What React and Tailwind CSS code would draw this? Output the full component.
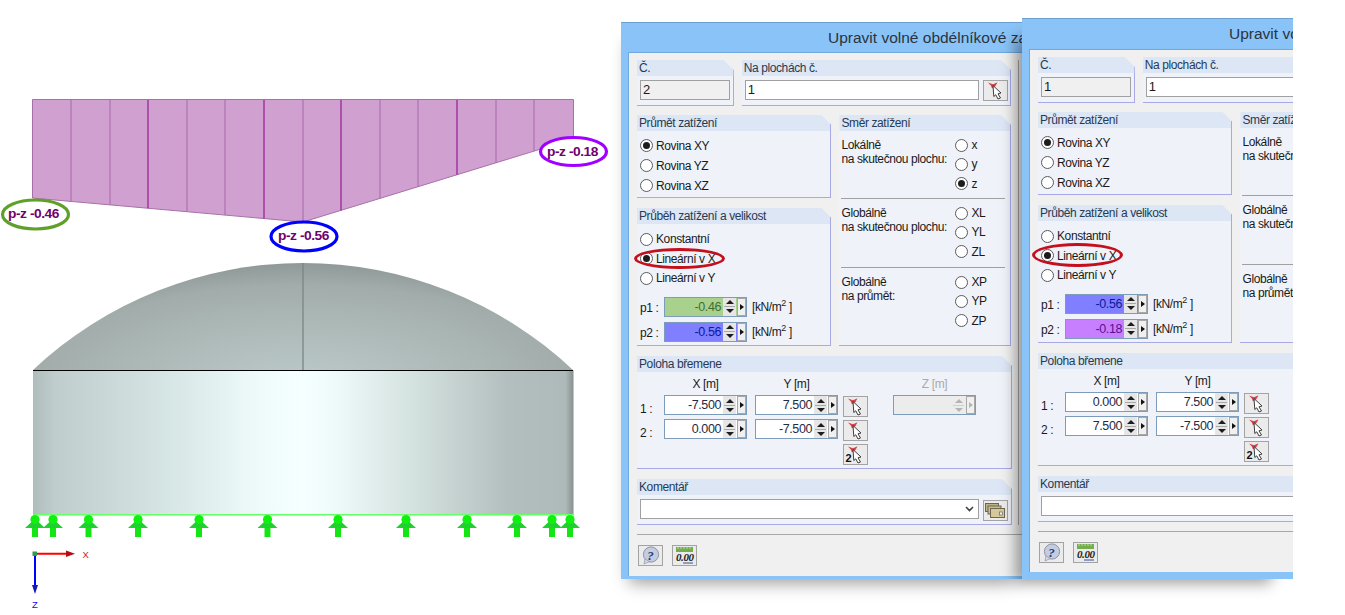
import React from "react";

const SUPPORTS = [35, 53, 88.5, 138, 199, 267.5, 338, 406, 467, 517, 552, 570];
const DIVIDERS = [71, 110, 148, 187, 225, 264, 303, 341, 380, 418, 457, 496, 534];
const DARK_DIVIDERS = [148, 264, 341, 457];

const loadLabels = [
  { cx: 35.5, cy: 214.5, rx: 33, ry: 14.5, stroke: "#5fa02a", x: 8, y: 218, text: "p-z -0.46" },
  { cx: 304, cy: 236.5, rx: 33, ry: 14.5, stroke: "#0000ff", x: 278, y: 240, text: "p-z -0.56" },
  { cx: 573.5, cy: 151.5, rx: 33, ry: 14, stroke: "#a000ff", x: 547, y: 156, text: "p-z -0.18" },
];

const Model = () => (
  <svg width="620" height="615" viewBox="0 0 620 615" className="block">
    <defs>
      <radialGradient id="dome" gradientUnits="userSpaceOnUse" cx="0" cy="0" r="1" gradientTransform="translate(303 385) scale(340 125)">
        <stop offset="0" stopColor="#bccaca" />
        <stop offset="0.6" stopColor="#a9b5b3" />
        <stop offset="0.8" stopColor="#a2acaa" />
        <stop offset="1" stopColor="#8c9694" />
      </radialGradient>
      <linearGradient id="wall" x1="0" x2="1" y1="0" y2="0">
        <stop offset="0" stopColor="#aebcbb" />
        <stop offset="0.04" stopColor="#bfcdcc" />
        <stop offset="0.25" stopColor="#d6e6e4" />
        <stop offset="0.42" stopColor="#eefbfa" />
        <stop offset="0.5" stopColor="#f6ffff" />
        <stop offset="0.56" stopColor="#eefafa" />
        <stop offset="0.7" stopColor="#d4e2e0" />
        <stop offset="0.88" stopColor="#b3bfbe" />
        <stop offset="0.985" stopColor="#aeb9b9" />
        <stop offset="1" stopColor="#87918f" />
      </linearGradient>
    </defs>

    {/* load diagram */}
    <polygon points="32.5,99.5 573.5,99.5 573.5,139 303,222 32.5,198" fill="#d0a0d0" stroke="#a870a8" />
    {DIVIDERS.map((x, i) => {
      const bottom = x < 303 ? 198 + ((x - 32.5) / 270.5) * 24 : 222 - ((x - 303) / 270.5) * 83;
      return (
        <line
          key={i}
          x1={x}
          x2={x}
          y1="100"
          y2={bottom}
          stroke={DARK_DIVIDERS.includes(x) ? "#880088" : "#a868a8"}
        />
      );
    })}
    {loadLabels.map((l) => (
      <g key={l.text}>
        <ellipse cx={l.cx} cy={l.cy} rx={l.rx} ry={l.ry} fill="#fff" stroke={l.stroke} strokeWidth="3.2" />
        <text
          x={l.x}
          y={l.y}
          fill="#700070"
          fontFamily="'Liberation Sans', sans-serif"
          fontWeight="700"
          fontSize="12"
          textLength="51"
          lengthAdjust="spacingAndGlyphs"
        >
          {l.text}
        </text>
      </g>
    ))}

    {/* tank */}
    <path d="M33 370 A394 394 0 0 1 573 370 Z" fill="url(#dome)" />
    <line x1="303" x2="303" y1="263" y2="370" stroke="#7a8585" strokeWidth="1.3" />
    <rect x="33" y="370" width="540.5" height="144" fill="url(#wall)" />
    <line x1="33" x2="573" y1="370.5" y2="370.5" stroke="#000" />
    <line x1="33" x2="574" y1="514.8" y2="514.8" stroke="#66ff66" strokeWidth="1.4" />

    {/* supports */}
    {SUPPORTS.map((x) => (
      <g key={x} fill="#14e614">
        <rect x={x - 3} y="524" width="6" height="13" />
        <polygon points={`${x - 3.5},522 ${x + 3.5},522 ${x + 10},528 ${x - 10},528`} fill="#1fd02f" />
        <circle cx={x} cy="519.5" r="4.6" fill="#10f010" />
      </g>
    ))}

    {/* axes */}
    <line x1="35" x2="70" y1="553.7" y2="553.7" stroke="#ff0000" strokeWidth="2" />
    <polygon points="66,550.5 75,553.7 66,557" fill="#b01010" />
    <line x1="35" x2="35" y1="554" y2="588" stroke="#0000ff" strokeWidth="2" />
    <polygon points="32,585 38,585 35,594" fill="#1a1ab0" />
    <rect x="32.5" y="551.5" width="4.5" height="4.5" fill="#2e9c4a" />
    <text x="82.5" y="558" fill="#e01010" fontFamily="'Liberation Sans', sans-serif" fontSize="9.5">X</text>
    <text x="32" y="608" fill="#1010e0" fontFamily="'Liberation Sans', sans-serif" fontSize="9.5">Z</text>
  </svg>
);

const PickIcon = ({ two }) => (
  <svg width="23" height="19" viewBox="0 0 23 19">
    <path d="M4 1.5 L9 3.2 L13.5 1.2 L11.5 5 L8 7.5 L7 4.8 Z" fill="#d8404a" />
    <path
      d="M9 4.5 L17 12 L14 12.8 L16.5 17 L14 18 L11.8 13.8 L9.8 15.5 Z"
      fill="#fff"
      stroke="#2a2a2a"
      strokeWidth="0.9"
      strokeLinejoin="round"
    />
    {two && (
      <text x="1.5" y="16.5" fontSize="11" fontWeight="700" fill="#111" fontFamily="'Liberation Sans', sans-serif">2</text>
    )}
  </svg>
);

const FolderIcon = () => (
  <svg width="21" height="15" viewBox="0 0 21 15">
    <rect x="0.5" y="0.5" width="13" height="8" fill="#bdb289" stroke="#6d6650" />
    <rect x="3" y="3" width="13" height="8" fill="#c9bd92" stroke="#6d6650" />
    <rect x="5.5" y="5.5" width="14" height="9" fill="#d6c998" stroke="#6d6650" />
    <rect x="14.5" y="9" width="3" height="3" fill="#f4f4f4" stroke="#555" strokeWidth="0.6" />
  </svg>
);

const HelpIcon = () => (
  <svg width="19" height="19" viewBox="0 0 19 19">
    <circle cx="10" cy="8.5" r="7.6" fill="#c4cde0" stroke="#8d93a5" />
    <path d="M4 13 L3 18 L8.5 15.5 Z" fill="#d6d9e2" stroke="#8d93a5" strokeWidth="0.7" />
    <text x="6.2" y="13.5" fontSize="13" fontWeight="700" fontStyle="italic" fill="#2b3a78" fontFamily="'Liberation Serif', serif">?</text>
  </svg>
);

const ValueIcon = () => (
  <svg width="21" height="19" viewBox="0 0 21 19">
    <rect x="2" y="1" width="17" height="5" fill="#74ad4e" />
    <path d="M4 1v2M7 1v2M10 1v2M13 1v2M16 1v2" stroke="#dcecc8" strokeWidth="0.7" />
    <text x="2" y="15" fontSize="11" fontWeight="700" fontStyle="italic" fill="#222" fontFamily="'Liberation Serif', serif">0.00</text>
    <line x1="9" x2="19" y1="17" y2="17" stroke="#3b4d9c" />
  </svg>
);

const IconButton = ({ children, className = "" }) => (
  <div className={`flex h-[21px] w-[25px] shrink-0 items-center justify-center border border-[#a3a3a3] bg-[#ebebeb] ${className}`}>
    {children}
  </div>
);

const Group = ({ title, className = "", bodyClass = "", children }) => (
  <div className={`flex flex-col ${className}`}>
    <div className="flex h-[16px] shrink-0 items-center border-r border-[#a9a9e6] bg-[#dce6f4] pl-[2px] text-[#263a52] [clip-path:polygon(0_0,calc(100%-10px)_0,100%_10px,100%_100%,0_100%)]">
      {title}
    </div>
    <div className={`flex-1 border-r border-b border-[#a9a9e6] bg-[#eff3f9] ${bodyClass}`}>{children}</div>
  </div>
);

const Radio = ({ label, checked, className = "" }) => (
  <div className={`flex items-center ${className}`}>
    <div className="flex h-[13px] w-[13px] shrink-0 items-center justify-center rounded-full border border-[#5a5a5a] bg-white">
      {checked && <div className="h-[7px] w-[7px] rounded-full bg-[#1c1c1c]" />}
    </div>
    <span className="ml-[3px] whitespace-nowrap">{label}</span>
  </div>
);

const Spin = ({ value, bg = "bg-white", color = "text-[#1f2a44]", disabled }) => (
  <div className={`flex h-[20px] w-[83px] shrink-0 items-stretch border border-[#7d9cba] ${bg}`}>
    <div className={`flex-1 pr-[2px] text-right text-[12.5px] leading-[18px] ${color}`}>{value}</div>
    <div className={`flex w-[13px] flex-col items-center justify-center gap-[2px] ${disabled ? "bg-[#ececec]" : "bg-[#e6e6e6]"}`}>
      <div className={`h-0 w-0 border-x-[4px] border-b-[4px] border-x-transparent ${disabled ? "border-b-[#b5b5b5]" : "border-b-[#1c1c1c]"}`} />
      <div className={`h-px w-[11px] ${disabled ? "bg-[#cfcfcf]" : "bg-[#a8a8a8]"}`} />
      <div className={`h-0 w-0 border-x-[4px] border-t-[4px] border-x-transparent ${disabled ? "border-t-[#b5b5b5]" : "border-t-[#1c1c1c]"}`} />
    </div>
    <div className="ml-px flex w-[9px] items-center justify-center border border-[#a8a8a8] bg-[#f0f0f0]">
      <div className={`h-0 w-0 border-y-[3.5px] border-l-[4px] border-y-transparent ${disabled ? "border-l-[#b5b5b5]" : "border-l-[#111]"}`} />
    </div>
  </div>
);

const RadioSection = ({ lines, options, className = "" }) => (
  <div className={`flex items-start pl-[2px] pt-[4.5px] ${className}`}>
    <div className="w-[114px] shrink-0 whitespace-nowrap pt-[2px] leading-[14px]">
      {lines.map((l) => (
        <div key={l}>{l}</div>
      ))}
    </div>
    <div className="flex flex-col">
      {options.map((o) => (
        <Radio key={o.label} label={o.label} checked={o.checked} className="h-[19.3px]" />
      ))}
    </div>
  </div>
);

const Unit = () => (
  <span className="ml-[5px]">
    [kN/m<sup className="text-[9px]">2</sup> ]
  </span>
);

const Dialog = ({ number, p1, p2, x1, x2, y1, y2, className, titleClass }) => (
  <div className={`absolute flex flex-col overflow-hidden border-t border-[#6f9fcc] bg-[#89c3f8] pl-[7px] ${className}`}>
    <div className={`flex shrink-0 items-center whitespace-nowrap pl-[200px] text-[15.5px] tracking-normal text-[#2a3440] ${titleClass}`}>
      Upravit volné obdélníkové zatížení
    </div>
    <div className="flex-1 border-t border-l border-[#6fa8dc] bg-[#f0f0f0] pt-[7px] pl-[8px]">
      <div className="w-[382px] border-r border-[#a5a5a5] pr-[7px]">
        <div className="flex gap-[8px]">
          <Group title="Č." className="w-[97px]" bodyClass="pt-[4px] pb-[5px] pl-[3px]">
            <div className="h-[20px] w-[90px] border border-[#a0a0a0] bg-[#f0f0f0] pl-[2px] text-[13px] leading-[18px]">{number}</div>
          </Group>
          <Group title="Na plochách č." className="w-[270px]" bodyClass="flex gap-[4px] pt-[4px] pb-[4px] pl-[3px]">
            <div className="h-[20px] w-[234px] shrink-0 border border-[#a0a0a0] bg-white pl-[2px] text-[13px] leading-[18px]">1</div>
            <IconButton>
              <PickIcon />
            </IconButton>
          </Group>
        </div>

        <div className="mt-[9px] flex gap-[8px]">
          <div className="flex w-[195px] flex-col">
            <Group title="Průmět zatížení" className="h-[83px]" bodyClass="pt-[4.5px] pl-[3px]">
              <Radio label="Rovina XY" checked className="h-[20px]" />
              <Radio label="Rovina YZ" className="h-[20px]" />
              <Radio label="Rovina XZ" className="h-[20px]" />
            </Group>
            <Group title="Průběh zatížení a velikost" className="mt-[10px] h-[138px]" bodyClass="pt-[5.5px] pl-[3px]">
              <Radio label="Konstantní" className="h-[19.5px]" />
              <Radio label="Lineární v X" checked className="h-[19.5px]" />
              <Radio label="Lineární v Y" className="h-[19.5px]" />
              <div className="mt-[8px] flex items-center">
                <div className="w-[24px] pt-[3px]">p1 :</div>
                <Spin value={p1.value} bg={p1.bg} color={p1.color} />
                <Unit />
              </div>
              <div className="mt-[4px] flex items-center">
                <div className="w-[24px] pt-[3px]">p2 :</div>
                <Spin value={p2.value} bg={p2.bg} color={p2.color} />
                <Unit />
              </div>
            </Group>
          </div>
          <Group title="Směr zatížení" className="w-[172px]">
            <RadioSection
              lines={["Lokálně", "na skutečnou plochu:"]}
              options={[{ label: "x" }, { label: "y" }, { label: "z", checked: true }]}
              className="h-[67px]"
            />
            <div className="mx-[2px] w-[164px] border-t border-[#a0a0a0]" />
            <RadioSection
              lines={["Globálně", "na skutečnou plochu:"]}
              options={[{ label: "XL" }, { label: "YL" }, { label: "ZL" }]}
              className="h-[68px]"
            />
            <div className="mx-[2px] w-[164px] border-t border-[#a0a0a0]" />
            <RadioSection
              lines={["Globálně", "na průmět:"]}
              options={[{ label: "XP" }, { label: "YP" }, { label: "ZP" }]}
            />
          </Group>
        </div>

        <Group title="Poloha břemene" className="mt-[10px] h-[113px] w-[375px]" bodyClass="pl-[3px]">
          <div className="flex h-[23px] items-center">
            <div className="ml-[24px] w-[83px] text-center">X [m]</div>
            <div className="ml-[8px] w-[83px] text-center">Y [m]</div>
            <div className="ml-[55px] w-[83px] text-center text-[#a9a9a9]">Z [m]</div>
          </div>
          <div className="flex h-[24px]">
            <div className="w-[24px] pt-[5px]">1 :</div>
            <Spin value={x1} />
            <div className="ml-[8px]">
              <Spin value={y1} />
            </div>
            <IconButton className="mt-px ml-[5px]">
              <PickIcon />
            </IconButton>
            <div className="ml-[25px]">
              <Spin value="" bg="bg-[#ececec]" disabled />
            </div>
          </div>
          <div className="flex h-[24px]">
            <div className="w-[24px] pt-[5px]">2 :</div>
            <Spin value={x2} />
            <div className="ml-[8px]">
              <Spin value={y2} />
            </div>
            <IconButton className="mt-px ml-[5px]">
              <PickIcon />
            </IconButton>
          </div>
          <IconButton className="ml-[203px] mt-px">
            <PickIcon two />
          </IconButton>
        </Group>

        <Group title="Komentář" className="mt-[10px] h-[46px] w-[375px]" bodyClass="flex gap-[4px] pt-[4px] pl-[3px]">
          <div className="flex h-[20px] w-[339px] shrink-0 items-center justify-end border border-[#a0a0a0] bg-white pr-[4px]">
            <svg width="9" height="6" viewBox="0 0 9 6">
              <path d="M1 1 L4.5 4.5 L8 1" fill="none" stroke="#444" strokeWidth="1.6" />
            </svg>
          </div>
          <IconButton className="mt-px">
            <FolderIcon />
          </IconButton>
        </Group>
      </div>

      <div className="mt-[9px] border-t border-[#a8a8a8]" />
      <div className="mt-[10px] flex gap-[9px] pl-px">
        <IconButton>
          <HelpIcon />
        </IconButton>
        <IconButton>
          <ValueIcon />
        </IconButton>
      </div>
    </div>
  </div>
);

export default function App() {
  return (
    <div className="relative h-[615px] w-[1345px] overflow-hidden bg-white font-['Liberation_Sans',sans-serif] text-[12px] tracking-[-0.4px] text-[#1a1a1a]">
      <Model />
      <Dialog
        number="2"
        p1={{ value: "-0.46", bg: "bg-[#a9d18e]", color: "text-[#3f6f2f]" }}
        p2={{ value: "-0.56", bg: "bg-[#7f7fff]", color: "text-[#0a1a9f]" }}
        x1="-7.500"
        y1="7.500"
        x2="0.000"
        y2="-7.500"
        titleClass="h-[29px]"
        className="top-[22px] left-[621px] h-[557px] w-[402px] pb-[3px] shadow-[0_12px_16px_-8px_rgba(0,0,0,0.4)]"
      />
      <Dialog
        number="1"
        p1={{ value: "-0.56", bg: "bg-[#7f7fff]", color: "text-[#0a1a9f]" }}
        p2={{ value: "-0.18", bg: "bg-[#c77fff]", color: "text-[#5a108f]" }}
        x1="0.000"
        y1="7.500"
        x2="7.500"
        y2="-7.500"
        titleClass="h-[30px]"
        className="top-[18px] left-[1022px] h-[561px] w-[271px] pb-[7px] shadow-[-14px_12px_14px_-8px_rgba(0,0,0,0.4)]"
      />

      {/* red marks drawn over the dialogs */}
      <div className="absolute top-[248px] left-[634px] h-[21px] w-[91px] rounded-[50%] border-[3px] border-[#c4101c]" />
      <div className="absolute top-[243px] left-[1032px] h-[24px] w-[91px] rounded-[50%] border-[3px] border-[#c4101c]" />
    </div>
  );
}
